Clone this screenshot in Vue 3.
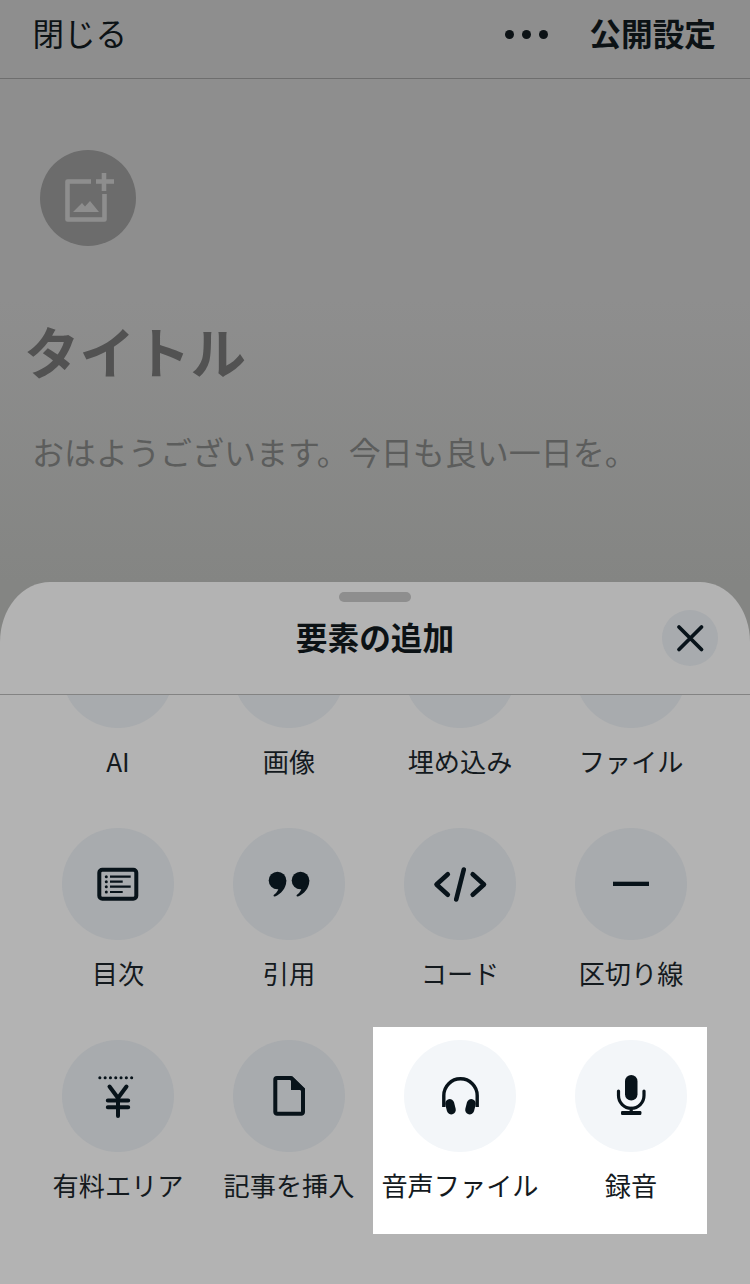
<script setup>
const items = [
  { label: 'AI', icon: 'none' },
  { label: '画像', icon: 'none' },
  { label: '埋め込み', icon: 'none' },
  { label: 'ファイル', icon: 'none' },
  { label: '目次', icon: 'toc' },
  { label: '引用', icon: 'quote' },
  { label: 'コード', icon: 'code' },
  { label: '区切り線', icon: 'line' },
  { label: '有料エリア', icon: 'yen' },
  { label: '記事を挿入', icon: 'doc' },
  { label: '音声ファイル', icon: 'phones', lit: true },
  { label: '録音', icon: 'mic', lit: true }
]
</script>

<template>
  <div class="page">
    <header class="topbar">
      <span class="close-text">閉じる</span>
      <div class="top-actions">
        <div class="dots"><i></i><i></i><i></i></div>
        <strong class="publish">公開設定</strong>
      </div>
    </header>

    <main class="editor">
      <div class="eyecatch">
        <svg width="96" height="96" viewBox="0 0 96 96" fill="none">
          <path d="M51 31.500H27.500V69.500H64.500V44" stroke="#8e8e8e" stroke-width="4.600" stroke-linejoin="round"/>
          <path d="M64 23v18M56 31.500h18" stroke="#8e8e8e" stroke-width="4.600"/>
          <path d="M33 62l9-9 3 3.500 5-5.500 9 11z" fill="#8e8e8e"/>
        </svg>
      </div>
      <h1 class="title">タイトル</h1>
      <p class="body-text">おはようございます。今日も良い一日を。</p>
    </main>

    <section class="sheet">
      <div class="sheet-head">
        <div class="handle"></div>
        <h2 class="sheet-title">要素の追加</h2>
        <button class="sheet-close" aria-label="閉じる">
          <svg width="56" height="56" viewBox="0 0 56 56" fill="none">
            <path d="M17 17l22.500 22.500M39.500 17L17 39.500" stroke="#08131a" stroke-width="3.800" stroke-linecap="round"/>
          </svg>
        </button>
      </div>
      <div class="sheet-body">
        <div class="spotlight"></div>
        <div class="grid">
          <div v-for="item in items" :key="item.label" class="cell" :class="{ lit: item.lit }">
            <div class="circle">
              <svg v-if="item.icon !== 'none'" width="56" height="56" viewBox="0 0 56 56" fill="none">
                <template v-if="item.icon === 'toc'">
                  <rect x="9.300" y="13.700" width="37" height="29" rx="3" stroke="#08131a" stroke-width="4"/>
                  <path d="M20 20.700h20.700M20 25.700h12.700M20 30.700h20.700M20 36h12.700" stroke="#08131a" stroke-width="2.200"/>
                  <circle cx="16.300" cy="20.700" r="1.500" fill="#08131a"/>
                  <circle cx="16.300" cy="25.700" r="1.500" fill="#08131a"/>
                  <circle cx="16.300" cy="30.700" r="1.500" fill="#08131a"/>
                  <circle cx="16.300" cy="36" r="1.500" fill="#08131a"/>
                </template>
                <template v-else-if="item.icon === 'quote'">
                  <circle cx="16.500" cy="24.500" r="8.800" fill="#08131a"/>
                  <path d="M25.300 24.500c0 8-5.500 13.500-11.300 16-1.300.5-2-1-1-1.700 3-2 5-5.500 5-9z" fill="#08131a"/>
                  <circle cx="39.500" cy="24.500" r="8.800" fill="#08131a"/>
                  <path d="M48.300 24.500c0 8-5.500 13.500-11.300 16-1.300.5-2-1-1-1.700 3-2 5-5.500 5-9z" fill="#08131a"/>
                </template>
                <template v-else-if="item.icon === 'code'">
                  <path d="M15.800 18.300L4.500 28.500l11.300 10.200M40.700 18.300L52 28.500 40.700 38.700M31.800 13.500l-7.600 30" stroke="#08131a" stroke-width="4.600" stroke-linecap="round" stroke-linejoin="round"/>
                </template>
                <template v-else-if="item.icon === 'line'">
                  <rect x="10" y="25.700" width="36" height="4.300" fill="#08131a"/>
                </template>
                <template v-else-if="item.icon === 'yen'">
                  <path d="M9.800 9.700h36.800" stroke="#08131a" stroke-width="3" stroke-linecap="round" stroke-dasharray="0.100 5.200"/>
                  <path d="M19.500 18.500L28 30l8.500-11.500M28 30v18M17.800 32.500h20.400M17.800 39.300h20.400" stroke="#08131a" stroke-width="4" stroke-linecap="round" stroke-linejoin="round"/>
                </template>
                <template v-else-if="item.icon === 'doc'">
                  <path d="M14.300 11.500A1.500 1.500 0 0 1 15.800 10H30L42 22v22a1.800 1.800 0 0 1-1.800 1.800H16.100a1.800 1.800 0 0 1-1.800-1.800z" stroke="#08131a" stroke-width="4" stroke-linejoin="round"/>
                  <path d="M30 8.500h1.500L44 20.500V22H30z" fill="#08131a"/>
                </template>
                <template v-else-if="item.icon === 'phones'">
                  <path d="M11.800 39V27.500a16.700 16.700 0 0 1 33.400 0V39" stroke="#08131a" stroke-width="3.400"/>
                  <rect x="14" y="31" width="9" height="15.500" rx="4.500" transform="rotate(-14 18.500 38.700)" fill="#08131a"/>
                  <rect x="34" y="31" width="9" height="15.500" rx="4.500" transform="rotate(14 38.500 38.700)" fill="#08131a"/>
                </template>
                <template v-else-if="item.icon === 'mic'">
                  <rect x="22" y="7" width="12.500" height="25.500" rx="6.250" fill="#08131a"/>
                  <path d="M15.500 23v4.500a12.750 12.750 0 0 0 25.500 0V23M28.200 40v4" stroke="#08131a" stroke-width="3.200" stroke-linecap="round"/>
                  <rect x="18" y="43" width="20.400" height="4" rx="1.200" fill="#08131a"/>
                </template>
              </svg>
            </div>
            <span class="label">{{ item.label }}</span>
          </div>
        </div>
      </div>
    </section>
  </div>
</template>

<style>
html, body { margin: 0; background: #b3b3b3; }
</style>

<style scoped>
.page {
  width: 750px;
  height: 1284px;
  overflow: hidden;
  display: flex;
  flex-direction: column;
  background: linear-gradient(#8e8e8e 0, #8e8e8e 300px, #848583 582px);
  font-family: "Noto Sans CJK JP", "Noto Sans", sans-serif;
  color: #0c1215;
}
.topbar {
  height: 79px;
  flex: none;
  box-sizing: border-box;
  border-bottom: 1px solid #6e6e6e;
  display: flex;
  align-items: center;
  justify-content: space-between;
  padding: 0 34px 14px 32.500px;
}
.close-text { font-size: 31.500px; line-height: 46px; }
.top-actions { display: flex; align-items: center; gap: 41px; }
.dots { display: flex; gap: 8px; margin-top: 4px; }
.dots i { width: 9px; height: 9px; border-radius: 50%; background: #0c1215; }
.publish { font-size: 31.700px; line-height: 46px; font-weight: 700; }
.editor { height: 503px; flex: none; padding-top: 71px; box-sizing: border-box; }
.eyecatch {
  width: 96px; height: 96px; margin-left: 40px;
  border-radius: 50%;
  background: #6c6c6c;
}
.eyecatch svg { display: block; }
.title {
  margin: 62px 0 0 24px;
  font-size: 55.500px;
  line-height: 84px;
  font-weight: 700;
  color: #525252;
}
.body-text {
  margin: 36px 0 0 32px;
  font-size: 32px;
  line-height: 46px;
  color: #5c5d5c;
}
.sheet {
  flex: 1;
  min-height: 0;
  display: flex;
  flex-direction: column;
  background: #b3b3b3;
  border-radius: 50px 50px 0 0 / 60px 60px 0 0;
}
.sheet-head {
  position: relative;
  height: 112px;
  flex: none;
  border-bottom: 1px solid #838383;
  display: flex;
  align-items: center;
  justify-content: center;
}
.handle {
  position: absolute;
  top: 10px; left: 339px;
  width: 72px; height: 10px;
  border-radius: 5px;
  background: #8e8e8e;
}
.sheet-title { margin: 0 0 5px; font-size: 31.700px; line-height: 46px; font-weight: 700; }
.sheet-close {
  position: absolute;
  top: 28px; right: 32px;
  width: 56px; height: 56px;
  padding: 0; border: 0;
  border-radius: 50%;
  background: #a8abae;
}
.sheet-close svg { display: block; }
.sheet-body {
  position: relative;
  flex: 1;
  min-height: 0;
  overflow: hidden;
}
.spotlight {
  position: absolute;
  left: 373px; top: 332px;
  width: 334px; height: 207px;
  background: #fff;
}
.grid {
  position: relative;
  display: grid;
  grid-template-columns: repeat(4, 171px);
  grid-auto-rows: 212px;
  margin: -79px 0 0 32.500px;
}
.cell { display: flex; flex-direction: column; align-items: center; }
.circle {
  width: 112px; height: 112px;
  border-radius: 50%;
  background: #a8abae;
  display: flex; align-items: center; justify-content: center;
}
.lit .circle { background: #f3f6f9; }
.label {
  margin-top: 14px;
  font-size: 26.200px;
  line-height: 38px;
  white-space: nowrap;
  color: #141a1e;
}
</style>
